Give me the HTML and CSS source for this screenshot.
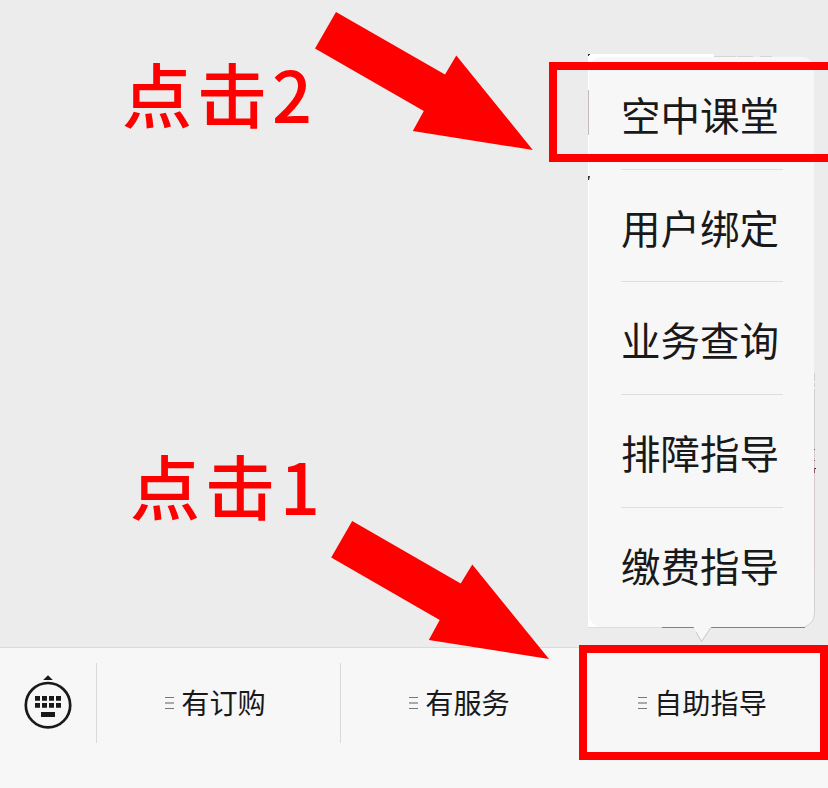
FILE: index.html
```html
<!DOCTYPE html>
<html lang="zh-CN">
<head>
<meta charset="utf-8">
<title>自助指导</title>
<link rel="stylesheet" href="styles.css">
</head>
<body>
<div class="screen">
  <main class="chat"></main>
  <nav class="bar">
    <div class="keyboard">
      <svg width="48" height="56" viewBox="0 0 48 56" fill="#191919">
        <path d="M19.200 4.900L24 .2l4.800 4.700z"/>
        <circle cx="24" cy="30.200" r="22.200" fill="none" stroke="#191919" stroke-width="2.700"/>
        <path d="M11 21h5v4.800h-5zM18 21h5v4.800h-5zM25 21h5v4.800h-5zM32 21h5v4.800h-5zM11 28h5v4.800h-5zM18 28h5v4.800h-5zM25 28h5v4.800h-5zM32 28h5v4.800h-5zM17 37h14v5H17z"/>
      </svg>
    </div>
    <div class="tab"><i class="lines"></i><span>有订购</span></div>
    <div class="tab"><i class="lines"></i><span>有服务</span></div>
    <div class="tab tab-last"><i class="lines"></i><span>自助指导</span></div>
  </nav>

  <div class="backing"></div>
  <div class="menu">
    <div class="item">空中课堂</div>
    <div class="item">用户绑定</div>
    <div class="item">业务查询</div>
    <div class="item">排障指导</div>
    <div class="item">缴费指导</div>
  </div>
  <svg class="overlay" width="828" height="788" viewBox="0 0 828 788">
    <path d="M588 54h2v1h-1v1h-1zM588 176h2l-1 4h-1z" fill="#333"/>
    <path d="M588.500 90v45" stroke="#c4b9bc"/>
    <path d="M714 56.500h22M737 56.500h16M760 56.500h12" stroke="#d9d5d5"/>
    <path d="M814.500 373v8M814.500 383v4M814.500 389v60" stroke="#cfcfcf"/>
    <path d="M814.500 449v122" stroke="#d6c9cc"/>
    <path d="M814.500 449v1M814.500 460v1M814.500 468v5" stroke="#865c60"/>
    <path d="M815 468h1v1h-1z" fill="#222"/>
    <path d="M814.500 571v42q0 10-10 14" stroke="#d2d0d1" fill="none"/>
    <path d="M588 627.500h74" stroke="#dedbdb"/>
    <path d="M662 627.500h33M711 627.500h94" stroke="#8d7c7e"/>
    <path d="M693 626l8.500 15 10-15z" fill="#f7f7f7"/>
    <path d="M696 632l5.500 9.500 9.500-14" stroke="#c9c6c7" fill="none"/>
    <g fill="#f00">
      <path d="M336 12l109 62.500L456.300 55.500 532.800 150 412.800 131l11-20L315 48.500z"/>
      <path d="M352.200 521l108.500 62.500 11.600-19L549 659 428.800 640l10.900-20L331.200 557.500z"/>
    </g>
  </svg>
  <div class="note note-two">点击2</div>
  <div class="note note-one">点击1</div>
  <div class="frame frame-menu"></div>
  <div class="frame frame-tab"></div>
</div>
</body>
</html>
```
FILE: styles.css
```css
* { box-sizing: border-box; }
body { margin: 0; }
.screen {
  position: relative;
  display: flex;
  flex-direction: column;
  width: 828px;
  height: 788px;
  overflow: hidden;
  background: #ececec;
  color: #191919;
  font-family: "Noto Sans CJK SC", sans-serif;
}
.chat { flex: 1; }
.bar {
  display: flex;
  height: 141px;
  padding: 15px 0 45px;
  background: #f7f7f7;
  border-top: 1px solid #dadada;
}
.keyboard { width: 96px; padding: 12px 0 0 24px; }
.keyboard svg { display: block; }
.tab {
  display: flex;
  align-items: center;
  justify-content: center;
  gap: 7px;
  width: 244px;
  border-left: 1px solid #dadada;
  padding-right: 6px;
  font-size: 28.200px;
  line-height: 38px;
}
.tab span { padding-bottom: 2px; }
.tab-last { border-left: 0; padding-right: 7px; }
.lines {
  width: 9px;
  height: 12px;
  border-top: 1px solid #777;
  border-bottom: 1px solid #777;
  background: linear-gradient(#aaa, #aaa) 0 4px / 9px 2px no-repeat;
}
.backing {
  position: absolute;
  left: 588px;
  top: 54px;
  width: 126px;
  height: 573px;
  background: #fff;
}
.menu {
  position: absolute;
  left: 589px;
  top: 57px;
  width: 225px;
  height: 570px;
  padding: 0 31px 0 32px;
  border-radius: 12px;
  background: #f7f7f7;
}
.item {
  height: 112.700px;
  border-bottom: 1px solid #dedede;
  padding-top: 28px;
  font-size: 39.500px;
  line-height: 58px;
  white-space: nowrap;
}
.item:last-child { border-bottom: 0; }
.overlay { position: absolute; left: 0; top: 0; }
.note {
  position: absolute;
  color: #f00;
  font-size: 70px;
  font-weight: 500;
  line-height: 100px;
  letter-spacing: 5px;
  white-space: nowrap;
}
.note-two { left: 122px; top: 43px; }
.note-one { left: 130px; top: 435px; }
.frame { position: absolute; border: 8px solid #f00; }
.frame-menu { left: 549px; top: 62px; width: 290px; height: 100px; }
.frame-tab { left: 579px; top: 645px; width: 249px; height: 115px; }
```
